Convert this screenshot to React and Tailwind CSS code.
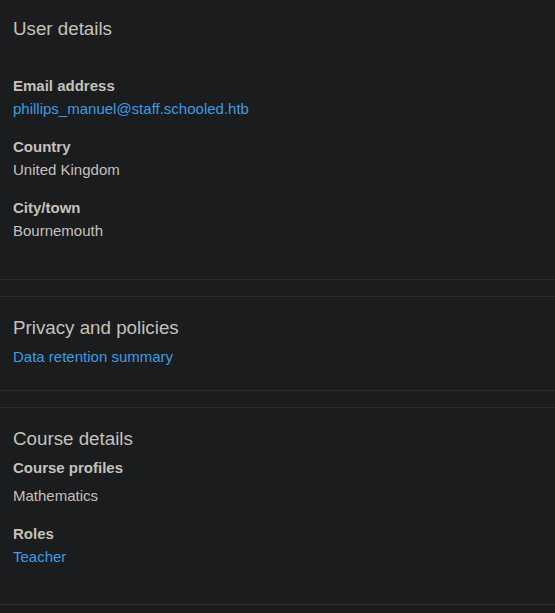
import React from 'react';

const font = { fontFamily: '"Liberation Sans", Arial, sans-serif' };

const Field = ({ label, children, tight }) => (
  <div className="mb-4">
    <dt className="font-bold text-[15px] leading-[22.5px]">{label}</dt>
    <dd className={`text-[15px] leading-[22.5px] ${tight ? 'mt-[5.5px]' : ''}`}>{children}</dd>
  </div>
);

const Card = ({ title, children, className = '' }) => (
  <section className={`border-y border-[#2b2c2f] px-[13px] mb-4 ${className}`}>
    <h3 className="text-[18.75px] leading-[22.5px]">{title}</h3>
    {children}
  </section>
);

export default function App() {
  return (
    <div className="min-h-[613px] bg-[#1b1c1e] text-[#c5c1bb] overflow-hidden" style={font}>
      <div className="-mt-px">
        <Card title="User details" className="pt-[18px] pb-[21px]">
          <dl className="mt-[34.5px]">
            <Field label="Email address">
              <a className="text-[#3d9be2]" href="#">phillips_manuel@staff.schooled.htb</a>
            </Field>
            <Field label="Country">United Kingdom</Field>
            <Field label="City/town">Bournemouth</Field>
          </dl>
        </Card>
        <Card title="Privacy and policies" className="pt-[20px] pb-[21px]">
          <div className="mt-[6.5px] text-[15px] leading-[22.5px]">
            <a className="text-[#3d9be2]" href="#">Data retention summary</a>
          </div>
        </Card>
        <Card title="Course details" className="pt-[20px] pb-[20px]">
          <dl className="mt-[6.5px]">
            <Field label="Course profiles" tight>Mathematics</Field>
            <Field label="Roles">
              <a className="text-[#3d9be2]" href="#">Teacher</a>
            </Field>
          </dl>
        </Card>
      </div>
    </div>
  );
}
